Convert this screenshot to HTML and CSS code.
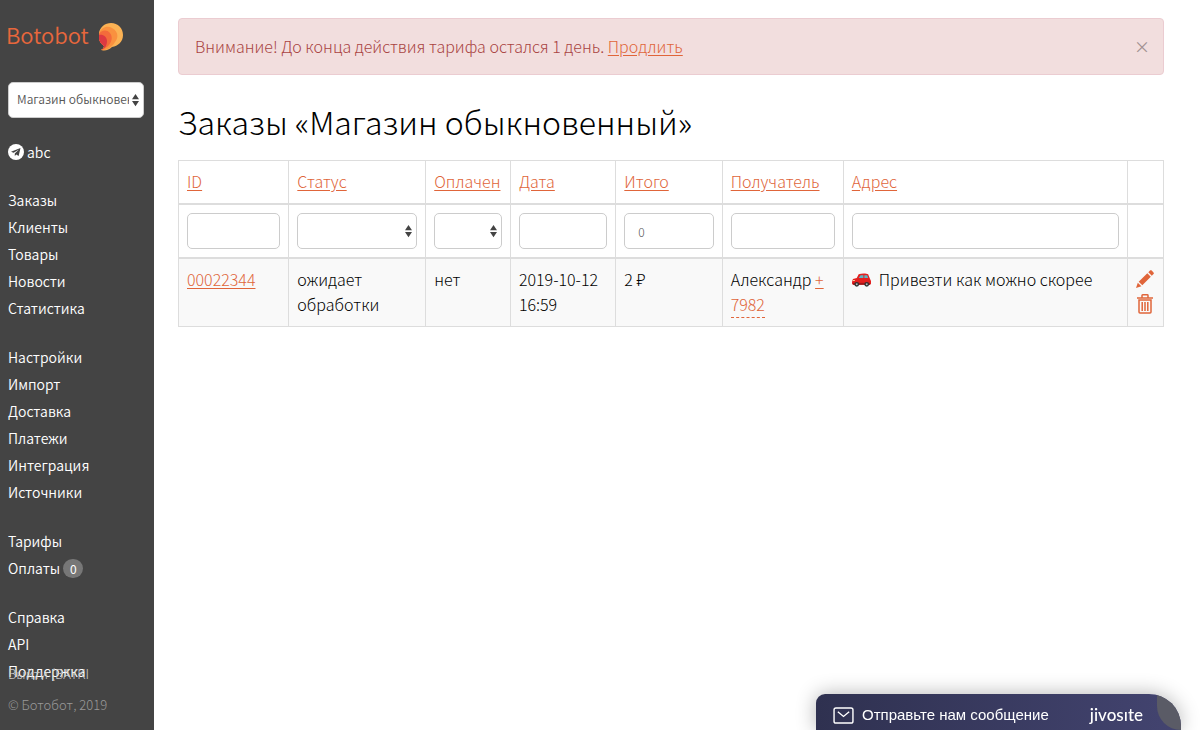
FILE: index.html
```html
<!DOCTYPE html>
<html lang="ru">
<head>
<meta charset="utf-8">
<title>Заказы</title>
<link rel="stylesheet" href="styles.css">
</head>
<body>
<div class="layout">
  <aside class="sidebar">
    <a class="brand" href="#">
      <span>Botobot</span>
      <svg class="brand-mark" viewBox="0 0 24 28" aria-hidden="true">
        <path fill="#fbb254" d="M0 10C1 4 6 0 12 0c7 0 12 5 12 12 0 7-5 11-11 12-3 3-7 4-11 3 2-1 3-2 3-4C1 20-1 16 0 10z"/>
        <path fill="#f9913f" d="M0 10C2 5 8 2 13 5c6 3 7 9 3 14-3 5-8 9-14 8 2-1 3-2 3-4C1 20-1 16 0 10z"/>
        <path fill="#f36b3b" d="M0 11c2-4 8-5 11-1 4 5 1 14-9 17 2-1 3-2 3-4C1 20-1 16 0 11z"/>
        <path fill="#dd3942" d="M0 12c4-1 8 2 8 6 0 4-2 8-6 9 2-1 3-2 3-4-4-3-6-6-5-11z"/>
      </svg>
    </a>
    <div class="select-wrap shop">
      <select class="field" aria-label="Магазин"><option>Магазин обыкновенный</option></select>
      <svg class="arrows" viewBox="0 0 8 14" aria-hidden="true"><path d="M4 0l4 6H0zM4 14l4-6H0z"/></svg>
    </div>
    <a class="bot" href="#">
      <svg viewBox="0 0 16 16" aria-hidden="true"><circle cx="8" cy="8" r="8" fill="#fff"/><path fill="#444" d="M12.500 4L3 7.800l2.600 1L11 5.500 6.800 9.400V12l1.500-1.600 2.300 1.500z"/></svg>
      <span>abc</span>
    </a>
    <nav class="menu">
      <ul>
        <li><a href="#">Заказы</a></li>
        <li><a href="#">Клиенты</a></li>
        <li><a href="#">Товары</a></li>
        <li><a href="#">Новости</a></li>
        <li><a href="#">Статистика</a></li>
      </ul>
      <ul>
        <li><a href="#">Настройки</a></li>
        <li><a href="#">Импорт</a></li>
        <li><a href="#">Доставка</a></li>
        <li><a href="#">Платежи</a></li>
        <li><a href="#">Интеграция</a></li>
        <li><a href="#">Источники</a></li>
      </ul>
      <ul>
        <li><a href="#">Тарифы</a></li>
        <li><a href="#">Оплаты <span class="badge">0</span></a></li>
      </ul>
      <ul>
        <li><a href="#">Справка</a></li>
        <li><a href="#">API</a></li>
        <li><a href="#">Поддержка</a></li>
      </ul>
    </nav>
    <div class="sidebar-foot">
      <a href="#">Выйти (BAYKI</a>
      <span>© Ботобот, 2019</span>
    </div>
  </aside>

  <main class="content">
    <div class="alert" role="alert">
      <p>Внимание! До конца действия тарифа остался 1 день. <a href="#">Продлить</a></p>
      <button class="close" type="button" aria-label="Закрыть">×</button>
    </div>
    <h1>Заказы «Магазин обыкновенный»</h1>
    <table class="orders">
      <colgroup>
        <col class="c-id"><col class="c-status"><col class="c-paid"><col class="c-date">
        <col class="c-total"><col class="c-client"><col class="c-address"><col class="c-actions">
      </colgroup>
      <thead>
        <tr>
          <th><a href="#">ID</a></th>
          <th><a href="#">Статус</a></th>
          <th><a href="#">Оплачен</a></th>
          <th><a href="#">Дата</a></th>
          <th><a href="#">Итого</a></th>
          <th><a href="#">Получатель</a></th>
          <th><a href="#">Адрес</a></th>
          <th></th>
        </tr>
        <tr class="filters">
          <td><input class="field" type="text" aria-label="ID"></td>
          <td><div class="select-wrap"><select class="field" aria-label="Статус"><option></option></select><svg class="arrows" viewBox="0 0 8 14" aria-hidden="true"><path d="M4 0l4 6H0zM4 14l4-6H0z"/></svg></div></td>
          <td><div class="select-wrap"><select class="field" aria-label="Оплачен"><option></option></select><svg class="arrows" viewBox="0 0 8 14" aria-hidden="true"><path d="M4 0l4 6H0zM4 14l4-6H0z"/></svg></div></td>
          <td><input class="field" type="text" aria-label="Дата"></td>
          <td><input class="field" type="text" aria-label="Итого" value="0"></td>
          <td><input class="field" type="text" aria-label="Получатель"></td>
          <td><input class="field" type="text" aria-label="Адрес"></td>
          <td></td>
        </tr>
      </thead>
      <tbody>
        <tr>
          <td><a href="#">00022344</a></td>
          <td>ожидает обработки</td>
          <td>нет</td>
          <td>2019-10-12 16:59</td>
          <td>2 ₽</td>
          <td>Александр <a href="#">+</a><br><a class="phone" href="#">7982</a></td>
          <td>
            <div class="address">
              <svg viewBox="0 0 20 14" aria-hidden="true">
                <path fill="#e3201f" d="M0 9l1-3 4-1 2-4c3-1 8-1 10 0l2 5 1 2v3l-1 1H1l-1-1z"/>
                <path fill="#5fb4c4" d="M7 5l2-3h3v3zM13 2h3l1 3h-4z"/>
                <path fill="#a01618" d="M1 10h18v2H1z"/>
                <circle cx="5" cy="11.500" r="2.500" fill="#333"/><circle cx="15.500" cy="11.500" r="2.500" fill="#333"/>
                <circle cx="5" cy="11.500" r="1" fill="#bbb"/><circle cx="15.500" cy="11.500" r="1" fill="#bbb"/>
                <path fill="#ffd9a0" d="M1 7h2v1H1z"/>
              </svg>
              <span>Привезти как можно скорее</span>
            </div>
          </td>
          <td class="actions">
            <a href="#" aria-label="Изменить"><svg viewBox="0 0 18 18" aria-hidden="true"><path d="M0 18l1.800-5.300 3.600 3.600zM2.700 11.800l8.600-8.500 3.500 3.500-8.500 8.500zM12.300 2.300L14 .6c.5-.5 1.200-.5 1.700 0l1.800 1.800c.5.5.5 1.200 0 1.700l-1.700 1.700z"/></svg></a>
            <a href="#" aria-label="Удалить"><svg viewBox="0 0 16 20" aria-hidden="true"><path fill="none" stroke="currentColor" stroke-width="1.500" d="M0 4h16M5 4V1.500q0-.7.700-.7h4.600q.7 0 .7.700V4M2 6h12v12q0 1-1 1H3q-1 0-1-1zM5.200 8v9M8 8v9M10.800 8v9"/></svg></a>
          </td>
        </tr>
      </tbody>
    </table>
  </main>
</div>

<button class="chat" type="button">
  <svg class="mail" viewBox="0 0 22 18" aria-hidden="true"><rect x="1" y="1" width="20" height="16" rx="2"/><path d="M5 5l6 5 6-5"/></svg>
  <span class="chat-text">Отправьте нам сообщение</span>
  <span class="chat-brand">jivosıte</span>
  <span class="chat-corner"></span>
</button>
</body>
</html>
```
FILE: styles.css
```css
* { box-sizing: border-box; }

body {
  margin: 0;
  background: #fff;
  color: #000;
  font: 300 16px/25px "Noto Sans CJK SC", "Noto Sans", sans-serif;
}

a { color: #e0653a; text-underline-offset: 2px; }

.layout { display: flex; min-height: 100vh; }

.sidebar {
  position: relative;
  flex: 0 0 154px;
  padding: 20px 10px 44px 8px;
  background: #444;
  font-size: 14px;
  font-weight: 350;
}

.sidebar a { color: #fff; text-decoration: none; }

.sidebar .brand {
  display: flex;
  align-items: center;
  gap: 10px;
  height: 34px;
  margin-left: -2px;
  color: #e8673c;
  font-size: 22px;
  line-height: 28px;
}

.brand span { margin-bottom: 6px; }

.brand-mark { width: 24px; height: 28px; }

.select-wrap { position: relative; }

.shop { margin: 28px 0 22px; }

.field {
  display: block;
  width: 100%;
  height: 36px;
  padding: 0 13px;
  border: 1px solid #ccc;
  border-radius: 5px;
  background: #fff;
  color: #555;
  font: inherit;
  font-size: 12px;
  appearance: none;
}

.shop .field { padding: 0 14px 3px 8px; }

.arrows {
  position: absolute;
  top: 11px;
  right: 5px;
  width: 7px;
  height: 14px;
  fill: #444;
  pointer-events: none;
}

.bot { display: flex; align-items: center; gap: 3px; height: 24px; }
.bot svg { width: 16px; height: 16px; }

.menu { margin-top: 23px; line-height: 27px; }
.menu ul { margin: 0 0 22px; padding: 0; list-style: none; }
.menu ul:last-child { margin: 0; }

.badge {
  display: inline-block;
  min-width: 20px;
  padding: 0 6px;
  border-radius: 10px;
  background: #777;
  font-size: 12px;
  font-weight: 400;
  line-height: 19px;
  text-align: center;
}

.sidebar-foot {
  position: absolute;
  bottom: 13px;
  left: 8px;
  display: flex;
  flex-direction: column;
  gap: 6px;
  color: #999;
  font-size: 13px;
  font-weight: 300;
}

.sidebar-foot a { color: #ccc; }

.content { flex: 1; min-width: 0; padding: 18px 36px 24px 24px; }

.alert {
  display: flex;
  align-items: center;
  justify-content: space-between;
  padding: 15px 13px 15px 16px;
  border: 1px solid #ebccd1;
  border-radius: 4px;
  background: #f2dede;
  color: #a94442;
}

.alert p { margin: 0; }

.close {
  padding: 0;
  border: 0;
  background: none;
  color: #a09090;
  font: inherit;
  font-weight: 400;
}

h1 { margin: 22px 0 15px; font-size: 32px; font-weight: 300; line-height: 48px; }

.orders { width: 100%; border-collapse: collapse; table-layout: fixed; }

.c-id { width: 11.2%; }
.c-status { width: 13.9%; }
.c-paid { width: 8.6%; }
.c-date { width: 10.7%; }
.c-total { width: 10.8%; }
.c-client { width: 12.3%; }
.c-address { width: 28.8%; }
.c-actions { width: 3.7%; }

.orders th, .orders td {
  padding: 8px 8px 9px;
  border: 1px solid #ddd;
  font-weight: 300;
  text-align: left;
  vertical-align: top;
}

.orders th, .orders .filters td { border-bottom: 2px solid #ddd; }
.orders tbody tr { background: #f9f9f9; }
.orders .filters td { padding: 8px; }

.orders .phone {
  padding-bottom: 1px;
  border-bottom: 1px dashed #e0653a;
  text-decoration: none;
}

.address { display: flex; align-items: center; gap: 8px; }
.address svg { width: 19px; height: 14px; flex: none; }

.orders .actions { padding: 7px 0; }
.actions a { display: flex; align-items: center; justify-content: center; height: 25px; }
.actions svg { width: 18px; height: 20px; fill: currentColor; }

.chat {
  position: fixed;
  right: 19px;
  bottom: 0;
  display: flex;
  align-items: center;
  width: 365px;
  height: 36px;
  padding: 6px 38px 0 17px;
  overflow: hidden;
  border: 0;
  border-radius: 9px 32px 0 0;
  background: linear-gradient(90deg, #2f3150, #434470);
  box-shadow: 0 0 20px rgba(0, 0, 0, 0.3);
  color: #fff;
  font: 15px/20px "Liberation Sans", Arial, sans-serif;
}

.mail { width: 21px; height: 17px; margin-right: 8px; fill: none; stroke: #fff; stroke-width: 1.5; }
.chat-brand { margin-left: auto; font: 500 17px/20px Lato, sans-serif; }

.chat-corner {
  position: absolute;
  top: 0;
  right: 0;
  width: 24px;
  height: 36px;
  border-radius: 0 0 0 24px;
  background: #5a5b66;
}
```
